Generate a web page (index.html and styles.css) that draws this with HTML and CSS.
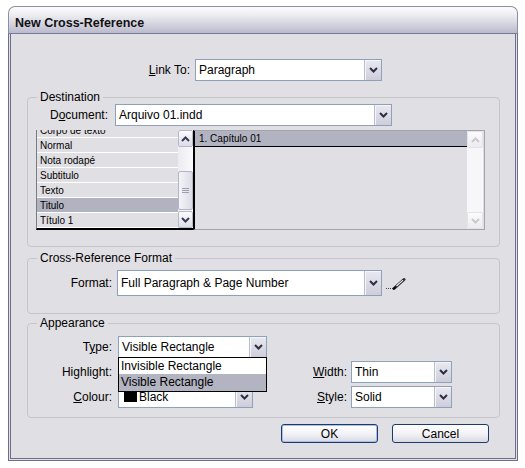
FILE: index.html
```html
<!DOCTYPE html>
<html>
<head>
<meta charset="utf-8">
<title>New Cross-Reference</title>
<link rel="stylesheet" href="styles.css">
</head>
<body>
<div class="window">
  <div class="titlebar">New Cross-Reference</div>
  <div class="client">
    <div class="row-link">
      <span class="lbl lbl-link"><u>L</u>ink To:</span>
      <div class="select sel-link"><span class="val">Paragraph</span><span class="drop"><svg width="9" height="6" viewBox="0 0 9 6"><polyline points="1,1 4.5,4.5 8,1" fill="none" stroke="#2e2e44" stroke-width="2"/></svg></span></div>
    </div>

    <fieldset class="group grp-dest">
      <legend>Destination</legend>
      <div class="gb gb-dest">
        <div class="row-doc">
          <span class="lbl lbl-doc">D<u>o</u>cument:</span>
          <div class="select sel-doc"><span class="val">Arquivo 01.indd</span><span class="drop"><svg width="9" height="6" viewBox="0 0 9 6"><polyline points="1,1 4.5,4.5 8,1" fill="none" stroke="#2e2e44" stroke-width="2"/></svg></span></div>
        </div>
        <div class="lists">
          <div class="list-left">
            <div class="items">
              <div class="item first">Corpo de texto</div>
              <div class="item">Normal</div>
              <div class="item">Nota rodapé</div>
              <div class="item">Subtitulo</div>
              <div class="item">Texto</div>
              <div class="item sel">Titulo</div>
              <div class="item">Título 1</div>
            </div>
            <div class="vscroll">
              <div class="sb-btn"><svg width="9" height="6" viewBox="0 0 9 6"><polyline points="1,5 4.5,1.5 8,5" fill="none" stroke="#3a3a52" stroke-width="2"/></svg></div>
              <div class="sb-track">
                <div class="thumb"><svg width="7" height="6" viewBox="0 0 7 6"><path d="M0 0.5H7M0 2.5H7M0 4.5H7" stroke="#9c9db0" stroke-width="1"/></svg></div>
              </div>
              <div class="sb-btn"><svg width="9" height="6" viewBox="0 0 9 6"><polyline points="1,1 4.5,4.5 8,1" fill="none" stroke="#3a3a52" stroke-width="2"/></svg></div>
            </div>
          </div>
          <div class="list-right">
            <div class="pane">
              <div class="hdr">1. Capítulo 01</div>
            </div>
            <div class="vscroll off">
              <div class="sb-btn"><svg width="9" height="6" viewBox="0 0 9 6"><polyline points="1,5 4.5,1.5 8,5" fill="none" stroke="#c9c9cf" stroke-width="2"/></svg></div>
              <div class="sb-track"></div>
              <div class="sb-btn"><svg width="9" height="6" viewBox="0 0 9 6"><polyline points="1,1 4.5,4.5 8,1" fill="none" stroke="#c9c9cf" stroke-width="2"/></svg></div>
            </div>
          </div>
        </div>
      </div>
    </fieldset>

    <fieldset class="group grp-fmt">
      <legend>Cross-Reference Format</legend>
      <div class="gb gb-fmt">
        <div class="row-fmt">
          <span class="lbl lbl-fmt">Format:</span>
          <div class="select sel-fmt"><span class="val">Full Paragraph &amp; Page Number</span><span class="drop"><svg width="9" height="6" viewBox="0 0 9 6"><polyline points="1,1 4.5,4.5 8,1" fill="none" stroke="#2e2e44" stroke-width="2"/></svg></span></div>
          <svg class="pencil" width="20" height="14" viewBox="0 0 20 14">
            <rect x="0" y="11" width="1" height="1" fill="#444"/>
            <rect x="2" y="11" width="1" height="1" fill="#444"/>
            <rect x="4" y="11" width="1" height="1" fill="#444"/>
            <rect x="6" y="11" width="1" height="1" fill="#444"/>
            <line x1="8" y1="11.5" x2="18" y2="2.5" stroke="#2a2a2a" stroke-width="3" stroke-linecap="round"/>
            <line x1="10.5" y1="9" x2="17" y2="3.2" stroke="#f4f4f4" stroke-width="1.1"/>
            <line x1="7.5" y1="12" x2="9.5" y2="10.2" stroke="#000" stroke-width="1.5"/>
          </svg>
        </div>
      </div>
    </fieldset>

    <fieldset class="group grp-app">
      <legend>Appearance</legend>
      <div class="gb gb-app">
        <div class="app-grid">
          <span class="lbl c1">T<u>y</u>pe:</span>
          <div class="cell-type">
            <div class="select sel-type"><span class="val">Visible Rectangle</span><span class="drop"><svg width="9" height="6" viewBox="0 0 9 6"><polyline points="1,1 4.5,4.5 8,1" fill="none" stroke="#2e2e44" stroke-width="2"/></svg></span></div>
            <div class="popup">
              <div class="pop-item">Invisible Rectangle</div>
              <div class="pop-item on">Visible Rectangle</div>
            </div>
          </div>
          <span></span>
          <span></span>

          <span class="lbl c1">Hi<u>g</u>hlight:</span>
          <div class="select sel-type"><span class="val"></span><span class="drop"><svg width="9" height="6" viewBox="0 0 9 6"><polyline points="1,1 4.5,4.5 8,1" fill="none" stroke="#2e2e44" stroke-width="2"/></svg></span></div>
          <span class="lbl c3"><u>W</u>idth:</span>
          <div class="select sel-small"><span class="val">Thin</span><span class="drop"><svg width="9" height="6" viewBox="0 0 9 6"><polyline points="1,1 4.5,4.5 8,1" fill="none" stroke="#2e2e44" stroke-width="2"/></svg></span></div>

          <span class="lbl c1"><u>C</u>olour:</span>
          <div class="select sel-colour"><span class="val"><span class="swatch"></span>Black</span><span class="drop"><svg width="9" height="6" viewBox="0 0 9 6"><polyline points="1,1 4.5,4.5 8,1" fill="none" stroke="#2e2e44" stroke-width="2"/></svg></span></div>
          <span class="lbl c3"><u>S</u>tyle:</span>
          <div class="select sel-small"><span class="val">Solid</span><span class="drop"><svg width="9" height="6" viewBox="0 0 9 6"><polyline points="1,1 4.5,4.5 8,1" fill="none" stroke="#2e2e44" stroke-width="2"/></svg></span></div>
        </div>
      </div>
    </fieldset>

    <div class="buttons">
      <button class="btn default">OK</button>
      <button class="btn">Cancel</button>
    </div>
  </div>
</div>
</body>
</html>
```
FILE: styles.css
```css
* { box-sizing: border-box; }
html, body { margin: 0; background: #ffffff; }
body {
  font-family: "Liberation Sans", Arial, sans-serif;
  font-size: 12px;
  color: #000;
}

.window { width: 510px; margin: 6px 0 0 8px; }

.titlebar {
  height: 28px;
  border: 1px solid #8e8ea6;
  border-bottom-color: #7a7a94;
  border-radius: 7px 7px 0 0;
  background: linear-gradient(#fcfcfd 0%, #f0f0f4 25%, #d8d8e3 60%, #babacd 100%);
  padding: 5px 0 0 6px;
  font-weight: bold;
  font-size: 12.5px;
  line-height: 22px;
  color: #111;
}

.client {
  height: 427px;
  border: 3px double #6e6e8c;
  border-top: 0;
  background: #e0dfe3;
  padding-top: 25px;
}

.lbl { white-space: nowrap; text-align: right; }
.lbl u { text-decoration: underline; }

/* Select / combobox */
.select {
  display: flex;
  height: 22px;
  border: 1px solid #8ea1ba;
  background: #ffffff;
}
.select .val {
  flex: 1;
  display: flex;
  align-items: center;
  padding-left: 3px;
  white-space: nowrap;
  overflow: hidden;
}
.select .drop {
  width: 17px;
  display: flex;
  align-items: center;
  justify-content: center;
  border-left: 1px solid #b9bccc;
  background: linear-gradient(#e9e9f0, #cdcedb);
  box-shadow: inset 1px 1px 0 #f6f6fa;
}

.row-link { display: flex; align-items: center; height: 22px; }
.lbl-link { width: 179px; margin-right: 5px; }
.sel-link { width: 187px; }

/* Group boxes */
.group {
  margin: 0 15px 0 16px;
  padding: 0;
  border: 1px solid #c5c5cd;
  border-radius: 4px;
  min-width: 0;
}
.group legend {
  margin-left: 9px;
  padding: 0 3px;
  line-height: 14px;
  font-size: 12px;
}
.grp-dest { margin-top: 9px; }
.grp-fmt { margin-top: 4px; }
.grp-app { margin-top: 2px; }

.gb-dest { padding-bottom: 16px; }
.row-doc { display: flex; align-items: center; height: 22px; }
.lbl-doc { width: 80px; margin-right: 7px; }
.sel-doc { width: 277px; }

.lists { display: flex; margin: 4px 0 0 8px; height: 100px; }

.list-left {
  display: flex;
  width: 157px;
  border-left: 1px solid #7c7c84;
  border-bottom: 2px solid #000;
}
.items { flex: 1; overflow: hidden; font-size: 10px; }
.item {
  height: 15px;
  line-height: 14px;
  padding-top: 1px;
  border-bottom: 1px solid #ffffff;
  padding-left: 3px;
  white-space: nowrap;
}
.item.first { margin-top: -7px; }
.item.sel { background: #b2b3c0; }

.vscroll {
  width: 15px;
  display: flex;
  flex-direction: column;
  background: linear-gradient(90deg, #ececf1, #fafafc);
}
.sb-btn {
  height: 17px;
  flex: none;
  display: flex;
  align-items: center;
  justify-content: center;
  border: 1px solid #b7b8c8;
  border-radius: 2px;
  background: linear-gradient(#fdfdfe, #dcdde6);
}
.sb-track { flex: 1; display: flex; flex-direction: column; }
.thumb {
  margin-top: 24px;
  height: 39px;
  border: 1px solid #b4b5c6;
  border-radius: 2px;
  background: linear-gradient(90deg, #f4f4f8, #dcdde6);
  display: flex;
  align-items: center;
  justify-content: center;
}
.vscroll.off { width: 16px; margin-right: 1px; background: #f7f7fa; }
.vscroll.off .sb-btn {
  border-color: #e3e3e8;
  background: linear-gradient(#fbfbfc, #ececf1);
}

.list-right {
  display: flex;
  width: 292px;
  border-left: 2px solid #000;
  border-top: 1px solid #a4a4aa;
  border-right: 1px solid #a4a4aa;
  border-bottom: 1px solid #a4a4aa;
}
.pane { flex: 1; }
.hdr {
  height: 16px;
  line-height: 15px;
  background: #b2b3c0;
  border-bottom: 1px solid #000;
  padding-left: 4px;
  font-size: 10px;
}

.gb-fmt { padding-bottom: 17px; }
.row-fmt { display: flex; align-items: center; height: 26px; margin-top: 5px; }
.lbl-fmt { width: 84px; margin-right: 5px; }
.sel-fmt { width: 265px; height: 26px; }
.pencil { margin: 2px 0 0 4px; }

.gb-app { padding-bottom: 9px; }
.app-grid {
  margin-top: 6px;
  display: grid;
  grid-template-columns: 90px 149px 84px 101px;
  grid-auto-rows: 22px;
  row-gap: 3px;
  align-items: center;
}
.app-grid .c1 { padding-right: 6px; }
.app-grid .c3 { padding-right: 4px; }
.cell-type { position: relative; height: 22px; z-index: 2; }
.sel-type { width: 149px; }
.sel-small { width: 101px; }
.sel-colour { width: 135px; }
.swatch {
  display: inline-block;
  width: 13px;
  height: 10px;
  background: #000;
  margin: 0 2px 0 2px;
}

.popup {
  position: absolute;
  top: 21px;
  left: 0;
  width: 149px;
  border: 1px solid #000;
  background: #fff;
}
.pop-item { height: 16px; line-height: 16px; padding-left: 2px; white-space: nowrap; }
.pop-item.on { height: 17px; background: #b3b4c1; }

.buttons {
  display: flex;
  justify-content: flex-end;
  gap: 14px;
  margin-top: 6px;
  padding-right: 26px;
}
.btn {
  width: 97px;
  height: 19px;
  padding: 0;
  font-family: "Liberation Sans", Arial, sans-serif;
  font-size: 12px;
  color: #000;
  border: 1px solid #1c3a6e;
  border-radius: 3px;
  background: linear-gradient(#ffffff 0%, #f3f3f7 50%, #d9d9e3 100%);
}
.btn.default { box-shadow: inset 0 0 0 1px #a9bfe6; }
```
